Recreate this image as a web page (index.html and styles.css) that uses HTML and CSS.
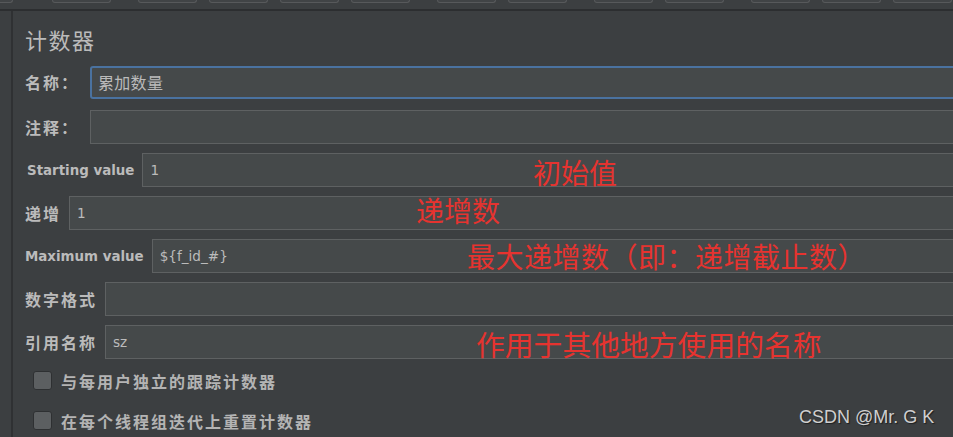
FILE: index.html
```html
<!DOCTYPE html>
<html lang="zh-CN">
<head>
<meta charset="utf-8">
<title>计数器</title>
<link rel="stylesheet" href="styles.css">
</head>
<body>
<div class="page">
  <div class="tabs">
    <div class="tab first"></div>
    <div class="tab sep"></div>
    <div class="tab sep"></div>
    <div class="tab"></div>
    <div class="tab"></div>
    <div class="tab"></div>
    <div class="tab sep"></div>
    <div class="tab"></div>
    <div class="tab sep"></div>
    <div class="tab"></div>
    <div class="tab sep"></div>
    <div class="tab"></div>
    <div class="tab"></div>
  </div>
  <div class="main">
    <div class="gutter"></div>
    <div class="panel">
      <h1 class="title">计数器</h1>
      <div class="row first-row">
        <label class="lbl cjk colon">名称：</label>
        <input class="field focus" type="text" value="累加数量" readonly>
      </div>
      <div class="row gap-a">
        <label class="lbl cjk colon">注释：</label>
        <input class="field" type="text" value="" readonly>
      </div>
      <div class="row">
        <label class="lbl lat start">Starting value</label>
        <input class="field" type="text" value="1" readonly>
      </div>
      <div class="row">
        <label class="lbl cjk">递增</label>
        <input class="field" type="text" value="1" readonly>
      </div>
      <div class="row">
        <label class="lbl lat">Maximum value</label>
        <input class="field" type="text" value="${f_id_#}" readonly>
      </div>
      <div class="row">
        <label class="lbl cjk">数字格式</label>
        <input class="field" type="text" value="" readonly>
      </div>
      <div class="row">
        <label class="lbl cjk">引用名称</label>
        <input class="field" type="text" value="sz" readonly>
      </div>
      <div class="check first-check">
        <span class="box"></span>
        <span class="clbl">与每用户独立的跟踪计数器</span>
      </div>
      <div class="check">
        <span class="box"></span>
        <span class="clbl">在每个线程组迭代上重置计数器</span>
      </div>
    </div>
  </div>

  <div class="note n1">初始值</div>
  <div class="note n2">递增数</div>
  <div class="note n3">最大递增数（即：递增截止数）</div>
  <div class="note n4">作用于其他地方使用的名称</div>
  <div class="mark">CSDN @Mr. G K</div>
</div>
</body>
</html>
```
FILE: styles.css
```css
html, body {
  margin: 0;
  padding: 0;
  background: #3c3f41;
  overflow: hidden;
}

.page {
  position: relative;
  width: 953px;
  height: 437px;
  overflow: hidden;
  font-family: "DejaVu Sans", "Noto Sans CJK SC", sans-serif;
  color: #bbbbbb;
}

.tabs {
  display: flex;
  height: 11px;
  border-bottom: 2px solid #2c2e30;
  box-sizing: border-box;
}

.tab {
  flex: none;
  width: 59px;
  height: 3px;
  margin-left: 12px;
  box-sizing: border-box;
  border: 1px solid #57595b;
  border-top: none;
  border-radius: 0 0 4px 4px;
  background: #414446;
}

.tab.first { margin-left: -46px; }
.tab.sep { margin-left: 27px; }
.tabs .tab.first + .tab { margin-left: 39px; }

.main {
  display: flex;
  height: 426px;
}

.gutter {
  flex: none;
  width: 11px;
}

.panel {
  flex: 1;
  border-left: 2px solid #2f3133;
  padding-left: 12px;
  margin-right: -20px;
}

.title {
  margin: 15px 0 0 0;
  font-family: "Noto Sans CJK SC", sans-serif;
  font-weight: normal;
  font-size: 22px;
  line-height: 26px;
  letter-spacing: 1.5px;
  color: #bbbbbb;
}

.row {
  display: flex;
  align-items: center;
  gap: 8px;
  height: 34px;
  margin-top: 9px;
}

.row.first-row { margin-top: 13px; }
.row.gap-a { margin-top: 11px; }

.lbl {
  flex: none;
  font-weight: bold;
  color: #bbbbbb;
}

.lbl.cjk {
  font-family: "Noto Sans CJK SC", sans-serif;
  font-size: 16px;
  letter-spacing: 2px;
}

.lbl.colon { margin-right: 3px; }

.lbl.lat {
  font-family: "DejaVu Sans", sans-serif;
  font-size: 13.4px;
}

.lbl.start { margin-left: 2px; }

.field {
  flex: 1;
  min-width: 0;
  height: 34px;
  box-sizing: border-box;
  margin: 0;
  padding: 0 0 0 7px;
  background: #45494a;
  border: 1px solid #5e6162;
  border-radius: 0;
  outline: none;
  color: #bbbbbb;
  font-family: "DejaVu Sans", "Noto Sans CJK SC", sans-serif;
  font-size: 13.6px;
}

.field.focus {
  border: 2px solid #4a72a0;
  border-radius: 3px;
  padding-left: 6px;
  font-family: "Noto Sans CJK SC", sans-serif;
  font-size: 16px;
  letter-spacing: 0.3px;
  height: 33px;
}

.check {
  display: flex;
  align-items: center;
  gap: 9px;
  margin-left: 8px;
  height: 19px;
}

.check + .check { margin-top: 21px; }
.check.first-check { margin-top: 12px; }

.box {
  flex: none;
  width: 19px;
  height: 19px;
  box-sizing: border-box;
  border: 1px solid #2e3032;
  border-radius: 3px;
  background: #5c5f61;
}

.clbl {
  font-family: "Noto Sans CJK SC", sans-serif;
  font-weight: bold;
  font-size: 16px;
  letter-spacing: 2px;
  color: #b4b4b4;
}

.note {
  position: absolute;
  font-family: "Noto Sans CJK SC", sans-serif;
  font-size: 28px;
  line-height: 28px;
  color: #e6332f;
  white-space: nowrap;
}

.n1 { left: 533px; top: 158px; }
.n2 { left: 416px; top: 196px; }
.n3 { left: 467px; top: 242px; letter-spacing: 0.5px; }
.n4 { left: 476px; top: 330px; font-size: 28.8px; }

.mark {
  position: absolute;
  left: 799px;
  top: 407px;
  font-family: "Liberation Sans", Arial, sans-serif;
  font-size: 18px;
  line-height: 20px;
  color: #cfcfcf;
  text-shadow: 1px 1px 1px #1e1f20;
  white-space: nowrap;
}
```
